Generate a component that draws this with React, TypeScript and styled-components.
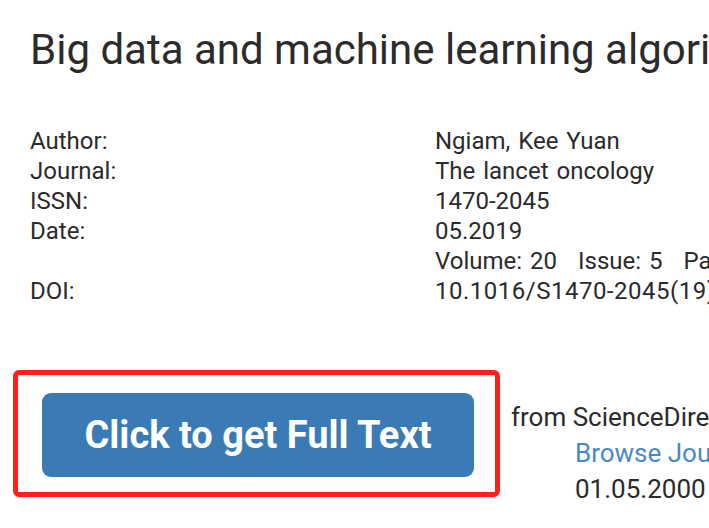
import React from "react";
import styled, { createGlobalStyle } from "styled-components";

const Global = createGlobalStyle`
  html, body { margin: 0; padding: 0; background: #fff; overflow: hidden; }
  body { font-family: Roboto, "Liberation Sans", sans-serif; color: #222; }
`;

const Page = styled.div`
  width: 709px;
  height: 528px;
  overflow: hidden;
  white-space: nowrap;
`;

const Title = styled.h1`
  margin: 0;
  padding: 26px 0 0 30px;
  font-size: 42px;
  font-weight: 400;
  line-height: 48px;
  color: #2b2b2b;
`;

const Meta = styled.div`
  display: grid;
  grid-template-columns: 405px auto;
  margin: 52px 0 0 30px;
  font-size: 24px;
  line-height: 30px;
  color: #2b2b2b;
`;

const Label = styled.div``;
const Value = styled.div<{ $wide?: boolean }>`
  word-spacing: 2px;
  letter-spacing: ${(p) => (p.$wide ? "0.5px" : "0")};
`;

const Gap = styled.span`
  display: inline-block;
  width: 21px;
`;

const Actions = styled.div`
  display: flex;
  align-items: flex-start;
  margin: 64px 0 0 13px;
`;

const Frame = styled.div`
  border: 5px solid #ff2018;
  border-radius: 6px;
  padding: 18px 21px 15px 24px;
`;

const Button = styled.button`
  display: flex;
  align-items: center;
  justify-content: center;
  width: 432px;
  height: 84px;
  border: none;
  border-radius: 9px;
  background: #3a7bb6;
  color: #fff;
  font-family: Roboto, "Liberation Sans", sans-serif;
  font-weight: 700;
  font-size: 38px;
  cursor: pointer;
`;

const Source = styled.div`
  display: flex;
  flex-direction: column;
  margin: 29px 0 0 11px;
  font-size: 26px;
  line-height: 36px;
  color: #2b2b2b;
`;

const SubLine = styled.div<{ $link?: boolean }>`
  padding-left: 64px;
  color: ${(p) => (p.$link ? "#4a89c8" : "#2b2b2b")};
`;

export default function App() {
  return (
    <Page>
      <Global />
      <Title>Big data and machine learning algorithms for health-care delivery</Title>
      <Meta>
        <Label>Author:</Label>
        <Value>Ngiam, Kee Yuan</Value>
        <Label>Journal:</Label>
        <Value>The lancet oncology</Value>
        <Label>ISSN:</Label>
        <Value>1470-2045</Value>
        <Label>Date:</Label>
        <Value>05.2019</Value>
        <Label />
        <Value>
          Volume: 20<Gap />Issue: 5<Gap />Pages: e262-e273
        </Value>
        <Label>DOI:</Label>
        <Value $wide>10.1016/S1470-2045(19)30149-4</Value>
      </Meta>
      <Actions>
        <Frame>
          <Button>Click to get Full Text</Button>
        </Frame>
        <Source>
          <div>from ScienceDirect (Elsevier)</div>
          <SubLine $link>Browse Journal</SubLine>
          <SubLine>01.05.2000 - now</SubLine>
        </Source>
      </Actions>
    </Page>
  );
}
